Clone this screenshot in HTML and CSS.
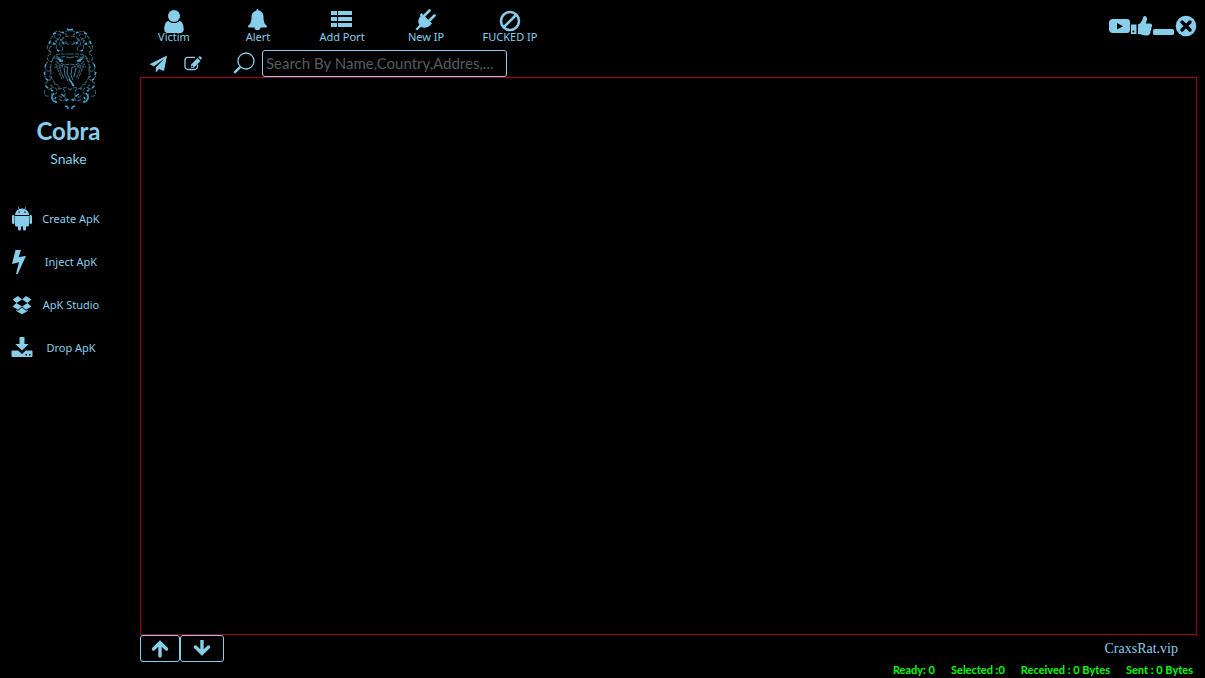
FILE: index.html
```html
<!DOCTYPE html>
<html lang="en">
<head>
    <meta charset="UTF-8">
    <meta name="viewport" content="width=device-width, initial-scale=1.0">
    <title>Cobra</title>
    <link rel="stylesheet" href="styles.css">
</head>
<body>
    <aside class="sidebar">
        <svg class="emblem" viewBox="0 0 54 82" aria-hidden="true">
            <defs>
                <g id="half">
                    <!-- crown -->
                    <g class="dim">
                        <path d="M26 3c-4-1-5 3-2 4M26 8c-5 0-8 3-7 6s5 2 4-1M19 5c-3-3-8-2-8 2s4 5 6 2-1-4-3-2"/>
                        <path d="M10 8c-3 2-4 6-1 8s6-1 4-3M20 10c-3 2-5 6-2 9M14 17c-2 3 0 6 3 6s4-4 1-5M9 18c-4 1-4 6 0 7"/>
                        <path d="M22 15c2 1 3 2 5 1M12 13c3-2 6-2 8 1M5 17c-2 3 0 6 3 7"/>
                    </g>
                    <!-- side scrolls -->
                    <g class="dim">
                        <path d="M8 26c-4 1-5 5-2 7s5-2 3-3M5 34c-4 3-4 8 0 9s4-4 1-4M10 31c-2 4-3 8-2 12"/>
                        <path d="M3 43c-3 4-1 8 2 9s4-3 1-4M8 43c-1 5 1 9 4 12M5 53c-4 2-3 7 1 8s4-4 1-4"/>
                        <path d="M2 62c-2 4 1 7 4 6M7 61c3-3 7-1 7 2s-4 5-6 3M11 56c4 0 6 3 5 6"/>
                        <path d="M15 61c4-2 8 1 7 5s-6 4-6 1M20 60c3-1 5 0 7 2M8 70c3 0 5 2 5 5M22 67c-1 3 1 5 4 5M16 71c3 3 6 2 7-1"/>
                    </g>
                    <!-- hood -->
                    <g class="dim">
                        <path d="M27 26h-10c-4 0-6 2-7 5M27 30c-5-2-9-2-13 1M13 33c3 4 7 6 10 5M18 35c2 2 5 2 9 1M11 30h6M13 28l5 3"/>
                        <path d="M12 36c2 1 3 3 3 6l4 9M11 39h15M16 37c1 4 2 9 5 13"/>
                    </g>
                    <g class="lit">
                        <path d="M24 1l3 1M21 5l-2-1M13 5l-3 1M7 13l-1 3M10 15l2 1M14 22l2 1M20 16l1-2"/>
                        <path d="M15 31l5 2M16 33h4M3 36l-1 3M1 44l1 3M3 51l2 1M3 58l2 2"/>
                        <path d="M11 65c-4 4-2 9 3 9M13 69l-1 2M18 66l3 2M25 71l-2 2M22 78l3 1M8 62l2 1"/>
                    </g>
                </g>
            </defs>
            <use href="#half"/>
            <use href="#half" transform="matrix(-1 0 0 1 54 0)"/>
            <path class="fang" d="M21 40l1 7 3 6M25 39l-1 6 3 7M29 39l-1 8 2 5M33 40l-2 9"/>
            <path class="lit" d="M26 51l5 7M28 53l2 5M25 79v2M29 79v2"/>
        </svg>
        <h1 class="title">Cobra</h1>
        <p class="subtitle">Snake</p>

        <nav class="menu">
            <button class="menu-item" type="button">
                <svg class="icon" viewBox="0 0 22 24">
                    <path d="M4 8C4 5 6 3 8 2.3L6.800.4l.6-.3L8.600 2a7 7 0 0 1 4.800 0L14.600.1l.6.3L14 2.300C16 3 18 5 18 8z"/>
                    <path d="M4 9h14v9a1.500 1.500 0 0 1-1.500 1.500H15V22a1.500 1.500 0 0 1-3 0v-2.500h-2V22a1.500 1.500 0 0 1-3 0v-2.500H5.500A1.500 1.500 0 0 1 4 18z"/>
                    <rect x="1" y="8" width="2.500" height="9" rx="1.200"/>
                    <rect x="18.500" y="8" width="2.500" height="9" rx="1.200"/>
                    <path class="hole" d="M7.500 4.600h1.200v1.200H7.500zM13.300 4.600h1.200v1.200h-1.200z"/>
                </svg>
                <span>Create ApK</span>
            </button>
            <button class="menu-item" type="button">
                <svg class="icon" viewBox="0 0 22 24">
                    <path d="M4.500 0H10L7.600 7.200 15 5.800 6.500 24.500 5 24.200 8 12.300 1 14z"/>
                </svg>
                <span>Inject ApK</span>
            </button>
            <button class="menu-item" type="button">
                <svg class="icon" viewBox="0 0 22 24">
                    <path d="M7 3l4 3.400-5.500 3.500L1.600 6.500zM15 3l5.400 3.500-3.900 3.400L11 6.400zM1.600 13.400L5.500 10l5.500 3.500-4 3.300zM20.400 13.400L16.500 10 11 13.500l4 3.300zM11 14.400l4 3.300 1.700-1V18L11 21.300 5.300 18v-1.300l1.700 1z"/>
                </svg>
                <span>ApK Studio</span>
            </button>
            <button class="menu-item" type="button">
                <svg class="icon" viewBox="0 0 22 24">
                    <path d="M8.500 1h5v7h4.200L11 14.500 4.300 8h4.200z"/>
                    <path d="M1.500 14.500h5.700L11 18l3.800-3.500h5.700a1 1 0 0 1 1 1V20a1 1 0 0 1-1 1h-19a1 1 0 0 1-1-1v-4.500a1 1 0 0 1 1-1z"/>
                    <path class="hole" d="M14.500 18H16v1.500h-1.500zM18 18h1.500v1.500H18z"/>
                </svg>
                <span>Drop ApK</span>
            </button>
        </nav>
    </aside>

    <main class="main">
        <header class="topbar">
            <nav class="tabs">
                <button class="tab" type="button">
                    <svg class="icon" viewBox="0 0 22 24">
                        <circle cx="11" cy="7" r="6"/>
                        <path d="M5.500 12c3 2.700 8 2.700 11 0 3 .3 4.200 4 4.200 8.500 0 2.500-1.500 3.500-3.500 3.500H4.800c-2 0-3.500-1-3.500-3.500 0-4.500 1.200-8.200 4.200-8.500z"/>
                    </svg>
                    <span>Victim</span>
                </button>
                <button class="tab" type="button">
                    <svg class="icon" viewBox="0 0 22 24">
                        <path d="M9.500 1a1 1 0 0 1 2 0v.6c3.500.6 5 3.300 5 6.400 0 5 1.300 7.400 3.500 9 0 1-.6 1.500-1.500 1.500h-16C1.600 18.500 1 18 1 17c2.200-1.600 3.500-4 3.500-9 0-3.100 1.500-5.800 5-6.400zM7.500 18.500h6c0 1.700-1.300 2.800-3 2.800s-3-1.100-3-2.800z"/>
                    </svg>
                    <span>Alert</span>
                </button>
                <button class="tab" type="button">
                    <svg class="icon" viewBox="0 0 22 24">
                        <path d="M0 2h6v4H0zM7 2h14v4H7zM0 8h6v4H0zM7 8h14v4H7zM0 14h6v4H0zM7 14h14v4H7z"/>
                    </svg>
                    <span>Add Port</span>
                </button>
                <button class="tab" type="button">
                    <svg class="icon" viewBox="0 0 22 24">
                        <path d="M6.500 4L17 14.500l-2 2c-3 2.700-6.500 2.700-9 1.200L2 21.500.5 20l3.800-3.900c-1.700-3-1.300-6.300 1.200-8.800L4.800 6z"/>
                        <path class="prong" d="M9.500 6.500l5-5M14.500 11.500l5-5"/>
                    </svg>
                    <span>New IP</span>
                </button>
                <button class="tab" type="button">
                    <svg class="icon" viewBox="0 0 22 24">
                        <circle class="ring" cx="11" cy="12" r="9"/>
                        <path class="ring" d="M5 18L17 6"/>
                    </svg>
                    <span>FUCKED IP</span>
                </button>
            </nav>
            <div class="window-controls">
                <button type="button" aria-label="YouTube">
                    <svg class="icon" viewBox="0 0 22 24">
                        <path fill-rule="evenodd" d="M4 5h14a3 3 0 0 1 3 3v8a3 3 0 0 1-3 3H4a4 4 0 0 1-4-3V8a4 4 0 0 1 4-3zM8 9v6.500l6-3.200z"/>
                    </svg>
                </button>
                <button type="button" aria-label="Like">
                    <svg class="icon" viewBox="0 0 22 24">
                        <path fill-rule="evenodd" d="M0 10.500h5.500V20H0zM1.500 16.500v1.800h1.800v-1.800z"/>
                        <path d="M7 10.500c3-1 4-4 5-6.500.4-1.200.5-2 1.500-2 2 0 2.500 1.500 2.500 3 0 1.800-.8 3-1.200 4.500H19c1.500 0 2.300 1 2 2.500l-.6 1.700-.1 1.900-.8 1.600-.2 1.700C18.700 21 17 21.500 15 21.500c-3.500 0-5-1.200-8-1.500z"/>
                    </svg>
                </button>
                <button type="button" aria-label="Minimize">
                    <svg class="icon" viewBox="0 0 22 24">
                        <rect x="0" y="15" width="21" height="6" rx="1.500"/>
                    </svg>
                </button>
                <button type="button" aria-label="Close">
                    <svg class="icon" viewBox="0 0 22 24">
                        <circle cx="11" cy="12" r="10.300"/>
                        <path class="cross" d="M7 8l8 8M15 8l-8 8"/>
                    </svg>
                </button>
            </div>
        </header>

        <form class="tools">
            <button class="tool" type="button" aria-label="Send">
                <svg class="icon" viewBox="0 0 20 20">
                    <path d="M19 1.500L16 17l-5-2-3.200 3.600V13.500L16.500 4.500 6 12.200 1.500 10.300z"/>
                </svg>
            </button>
            <button class="tool" type="button" aria-label="Edit">
                <svg class="icon" viewBox="0 0 20 20">
                    <path class="thin" d="M12 3.300H5a3 3 0 0 0-3 3V12.500a3 3 0 0 0 3 3h6.500a3 3 0 0 0 3-3v-2"/>
                    <path d="M14.500 4l3 3-6.700 6.700H8v-3zM15.300 3.200l.7-.7q.8-.6 1.500 0l1 1q.6.7 0 1.500l-.7.7z"/>
                    <path class="hole" d="M9 11.300l1.300 1.300-.5.5H8.700v-1.300z"/>
                </svg>
            </button>
            <label class="search-label" for="search" aria-label="Search">
                <svg class="icon" viewBox="0 0 24 24">
                    <circle class="thin" cx="14" cy="9" r="8"/>
                    <path class="handle" d="M8.300 14.800L2.200 20.800"/>
                </svg>
            </label>
            <input class="search" id="search" type="text" placeholder="Search By Name,Country,Addres,...">
        </form>

        <section class="panel"></section>

        <footer class="bottom">
            <div class="arrows">
                <button class="arrow-up" type="button" aria-label="Up">
                    <svg class="icon" viewBox="0 0 18 18">
                        <path class="arrow" d="M9 16V4M2.500 9L9 2.700 15.500 9"/>
                    </svg>
                </button>
                <button class="arrow-down" type="button" aria-label="Down">
                    <svg class="icon" viewBox="0 0 18 18">
                        <path class="arrow" d="M9 0v12M2.500 7L9 13.300 15.500 7"/>
                    </svg>
                </button>
            </div>
            <a class="site" href="#">CraxsRat.vip</a>
        </footer>
        <div class="status">
            <span>Ready: 0</span>
            <span>Selected :0</span>
            <span>Received : 0 Bytes</span>
            <span>Sent : 0 Bytes</span>
        </div>
    </main>
</body>
</html>
```
FILE: styles.css
```css
* {
    box-sizing: border-box;
}

body {
    margin: 0;
    min-height: 100vh;
    display: flex;
    background: #000;
    color: skyblue;
    font-family: Lato, "Liberation Sans", sans-serif;
}

button {
    padding: 0;
    border: none;
    background: none;
    color: inherit;
    cursor: pointer;
}

.icon {
    display: block;
    fill: skyblue;
}

.hole {
    fill: #000;
}

.thin, .prong, .ring, .handle, .arrow, .cross {
    fill: none;
    stroke: skyblue;
    stroke-width: 1.3;
}

.prong, .ring {
    stroke-width: 2.6;
    stroke-linecap: round;
}

.handle {
    stroke-width: 2.4;
}

.arrow {
    stroke-width: 3.4;
    stroke-linecap: round;
}

.cross {
    stroke: #000;
    stroke-width: 3.4;
    stroke-linecap: round;
}

/* Sidebar */
.sidebar {
    flex: none;
    width: 132px;
    padding-top: 28px;
}

.emblem {
    display: block;
    width: 54px;
    height: 82px;
    margin-left: 43px;
    fill: none;
}

.dim {
    stroke: #336070;
    stroke-width: 1.1;
    stroke-dasharray: 4 1;
}

.lit {
    stroke: #3aa5d4;
    stroke-width: 1.4;
}

.fang {
    stroke: #3d7f9c;
    stroke-width: 1;
}

.title, .subtitle {
    margin: 0;
    padding-left: 5px;
    text-align: center;
}

.title {
    margin-top: 6px;
    font-size: 24px;
    line-height: 30px;
}

.subtitle {
    font-size: 14px;
    line-height: 26px;
}

.menu {
    display: flex;
    flex-direction: column;
    margin-top: 25px;
}

.menu-item {
    display: flex;
    align-items: center;
    height: 43px;
    padding-left: 11px;
}

.menu-item .icon, .tab .icon, .window-controls .icon {
    width: 22px;
    height: 24px;
}

.menu-item span {
    width: 76px;
    text-align: center;
}

.menu-item span, .tab span {
    font-family: "Noto Sans", sans-serif;
    font-size: 11px;
    line-height: 14px;
}

/* Top bar */
.main {
    flex: 1;
    display: flex;
    flex-direction: column;
    min-width: 0;
}

.topbar {
    display: flex;
    justify-content: space-between;
    height: 50px;
    padding-right: 8px;
}

.tabs {
    display: flex;
}

.tab {
    display: flex;
    flex-direction: column;
    align-items: center;
    width: 84px;
    padding-top: 9px;
}

.tab span {
    margin-top: -3px;
}

.window-controls {
    display: flex;
    padding-top: 14px;
}

.window-controls button {
    height: 24px;
}

/* Search row */
.tools {
    display: flex;
    align-items: center;
    height: 27px;
    padding-left: 16px;
}

.tool {
    margin-right: 15px;
}

.tool .icon {
    width: 20px;
    height: 20px;
}

.search-label {
    margin: 0 6px 0 14px;
}

.search-label .icon {
    width: 24px;
    height: 24px;
}

.search {
    width: 245px;
    height: 27px;
    padding: 0 3px 2px;
    border: 1px solid skyblue;
    border-radius: 3px;
    background: #000;
    color: skyblue;
    font-family: inherit;
    font-size: 15px;
}

.search::placeholder {
    color: #5a5a5a;
}

.panel {
    flex: 1;
    margin: 0 8px;
    border: 1px solid #a0000f;
}

/* Bottom */
.bottom {
    display: flex;
    justify-content: space-between;
    align-items: center;
    height: 27px;
    padding: 0 27px 0 8px;
}

.arrows {
    display: flex;
}

.arrows button {
    display: flex;
    justify-content: center;
    align-items: center;
    width: 40px;
    height: 27px;
    border: 1px solid skyblue;
    border-radius: 3px;
}

.arrows .arrow-down {
    width: 44px;
}

.arrows .icon {
    width: 18px;
    height: 18px;
}

.site {
    color: skyblue;
    font-family: "Liberation Serif", serif;
    font-size: 14px;
    text-decoration: none;
}

.status {
    display: flex;
    justify-content: flex-end;
    gap: 16px;
    padding-right: 12px;
    color: #00ff00;
    font-size: 11px;
    font-weight: bold;
    line-height: 16px;
}
```
